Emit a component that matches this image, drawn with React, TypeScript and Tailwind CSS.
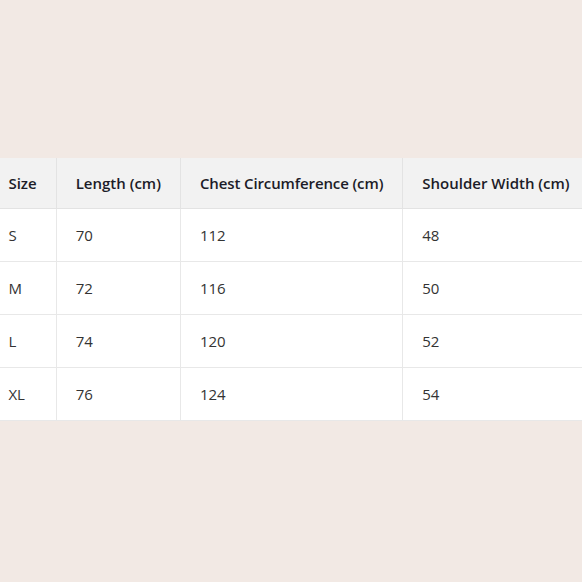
const rows = [
	["S", "70", "112", "48"],
	["M", "72", "116", "50"],
	["L", "74", "120", "52"],
	["XL", "76", "124", "54"],
];

const headers = ["Size", "Length (cm)", "Chest Circumference (cm)", "Shoulder Width (cm)"];

export default function App() {
	return (
		<div
			className="h-[582px] w-[582px] overflow-hidden bg-[#f2e9e4] flex items-center justify-center pb-[3px] pr-[4px]"
			style={{ fontFamily: '"Open Sans", "Noto Sans", sans-serif' }}
		>
			<table className="shrink-0 border-collapse bg-white text-[15px] text-[#333]">
				<thead>
					<tr className="bg-[#f2f2f2] text-[#1c1c28]">
						{headers.map((h, i) => (
							<th
								key={h}
								className={`h-[50px] px-[19px] text-left font-semibold whitespace-nowrap border-b border-[#e3e3e3] ${
									i > 0 ? "border-l" : ""
								} ${i === 2 ? "tracking-[-0.12px]" : ""}`}
							>
								{h}
							</th>
						))}
					</tr>
				</thead>
				<tbody>
					{rows.map((r) => (
						<tr key={r[0]}>
							{r.map((c, i) => (
								<td
									key={i}
									className={`h-[53px] px-[19px] border-b border-[#e8e8e8] ${
										i > 0 ? "border-l" : ""
									}`}
								>
									{c}
								</td>
							))}
						</tr>
					))}
				</tbody>
			</table>
		</div>
	);
}
